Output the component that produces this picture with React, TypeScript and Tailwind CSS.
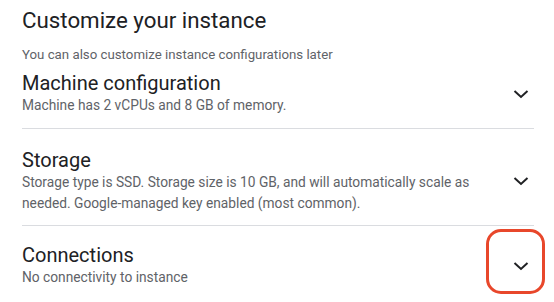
const Chevron = () => (
  <svg width="24" height="24" viewBox="0 0 24 24" className="shrink-0">
    <path d="M5.5 9 L12 15 L18.5 9" fill="none" stroke="#202124" strokeWidth="2" />
  </svg>
);

const sections = [
  {
    title: "Machine configuration",
    desc: "Machine has 2 vCPUs and 8 GB of memory.",
    cls: "pt-[6px] pb-[12px] border-b border-[#dadce0]",
  },
  {
    title: "Storage",
    desc: "Storage type is SSD. Storage size is 10 GB, and will automatically scale as needed. Google-managed key enabled (most common).",
    cls: "pt-[19px] pb-[11px] border-b border-[#dadce0]",
  },
  {
    title: "Connections",
    desc: "No connectivity to instance",
    cls: "pt-[17px]",
    marked: true,
  },
];

export default function App() {
  return (
    <div className="w-[554px] h-[302px] overflow-hidden bg-white pl-[22px] pr-[20px] font-['Roboto',sans-serif]">
      <h1 className="pt-[6px] text-[22.3px] leading-[28px] text-[#202124]">Customize your instance</h1>
      <p className="mt-[11px] text-[13.25px] leading-[20px] text-[#5f6368]">
        You can also customize instance configurations later
      </p>

      {sections.map((s) => (
        <div key={s.title} className={`flex items-center justify-between ${s.cls}`}>
          <div className="w-[482px]">
            <div className="text-[20px] leading-[24px] text-[#202124]">{s.title}</div>
            <div className="text-[13.75px] leading-[21px] text-[#5f6368]">{s.desc}</div>
          </div>
          <div className="relative mr-[1px]">
            <Chevron />
            {s.marked && (
              <div className="absolute left-[-23px] top-[-25px] w-[59px] h-[65px] rounded-[15px] border-[3px] border-[#e8472b]" />
            )}
          </div>
        </div>
      ))}
    </div>
  );
}
